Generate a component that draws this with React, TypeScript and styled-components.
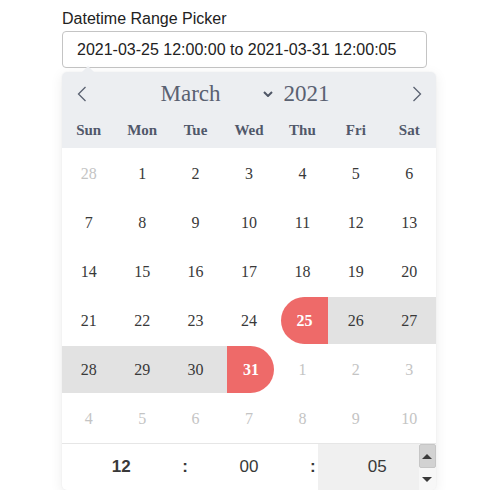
import styled, { createGlobalStyle, css } from "styled-components";

const GlobalStyle = createGlobalStyle`
    body {
        margin: 0;
        background: #ffffff;
    }
`;

const Page = styled.div`
    padding: 9px 0 0 62px;
    font-family: "Liberation Sans", Arial, sans-serif;
`;

const Label = styled.div`
    font-size: 16px;
    line-height: 20px;
    color: #222222;
    margin-bottom: 2px;
`;

const Input = styled.div`
    width: 365px;
    height: 37px;
    box-sizing: border-box;
    border: 1px solid #c4c4c4;
    border-radius: 4px;
    padding: 0 14px;
    display: flex;
    align-items: center;
    font-size: 16px;
    color: #222222;
`;

const Calendar = styled.div`
    position: relative;
    margin-top: 4px;
    width: 374px;
    background: #ffffff;
    border-radius: 5px;
    box-shadow: 0 3px 13px rgba(0, 0, 0, 0.08), 0 0 2px rgba(0, 0, 0, 0.06);
    font-family: "Liberation Serif", "Times New Roman", serif;
    &::before {
        content: "";
        position: absolute;
        top: -6px;
        left: 20px;
        border-left: 6px solid transparent;
        border-right: 6px solid transparent;
        border-bottom: 6px solid #eceef1;
    }
`;

const Header = styled.div`
    background: #eceef1;
    border-radius: 5px 5px 0 0;
    color: #5a6171;
`;

const NavRow = styled.div`
    height: 44px;
    display: grid;
    grid-template-columns: 40px 1fr 40px;
    align-items: center;
`;

const NavArrow = styled.div<{ $side: "prev" | "next" }>`
    display: flex;
    justify-content: ${(p) => (p.$side === "prev" ? "flex-start" : "flex-end")};
    padding: 0 14px;
    ${(p) => (p.$side === "prev" ? "padding-left: 15px;" : "padding-right: 14px;")}
`;

const MonthGroup = styled.div`
    display: flex;
    align-items: center;
    justify-content: center;
    font-size: 23px;
    padding-right: 8px;
`;

const Chevron = styled.span`
    display: flex;
    margin: 0 11px 0 42px;
`;

const WeekRow = styled.div`
    height: 32px;
    padding-bottom: 4px;
    box-sizing: border-box;
    display: grid;
    grid-template-columns: repeat(7, 1fr);
    align-items: center;
    font-size: 15px;
    font-weight: 700;
    color: #51586a;
    text-align: center;
`;

const DaysGrid = styled.div`
    display: grid;
    grid-template-columns: repeat(7, 1fr);
    padding-top: 1px;
`;

type Kind = "normal" | "other" | "range" | "start" | "end";

const Cell = styled.div<{ $kind: Kind }>`
    height: 47px;
    margin: 1px 0;
    display: flex;
    justify-content: center;
    ${(p) => p.$kind === "range" && css`background: #e2e2e2;`}
    ${(p) =>
        p.$kind === "start" &&
        css`background: linear-gradient(to right, transparent 50%, #e2e2e2 50%);`}
    ${(p) =>
        p.$kind === "end" &&
        css`background: linear-gradient(to right, #e2e2e2 50%, transparent 50%);`}
`;

const Day = styled.span<{ $kind: Kind }>`
    width: 47px;
    height: 47px;
    display: flex;
    align-items: center;
    justify-content: center;
    font-size: 16px;
    color: ${(p) => (p.$kind === "other" ? "#c4c4c4" : "#393939")};
    ${(p) =>
        (p.$kind === "start" || p.$kind === "end") &&
        css`
            background: #ee6a69;
            color: #ffffff;
            font-weight: 700;
            border-radius: ${p.$kind === "start" ? "50px 0 0 50px" : "0 50px 50px 0"};
            margin-left: 4px;
        `}
`;

const TimeRow = styled.div`
    display: flex;
    height: 46px;
    border-top: 1px solid #e6e6e6;
    border-radius: 0 0 5px 5px;
    overflow: hidden;
    font-family: "Liberation Sans", Arial, sans-serif;
    font-size: 17px;
    color: #393939;
`;

const TimeField = styled.div<{ $bold?: boolean; $active?: boolean }>`
    flex: 1;
    display: flex;
    align-items: center;
    justify-content: center;
    font-weight: ${(p) => (p.$bold ? 700 : 400)};
    background: ${(p) => (p.$active ? "#f0f0f0" : "transparent")};
    position: relative;
`;

const Separator = styled.div`
    width: 9.5px;
    display: flex;
    align-items: center;
    justify-content: center;
    font-weight: 700;
`;

const ActiveSeconds = styled.div`
    flex: 1;
    display: flex;
    background: #f0f0f0;
`;

const SecondsText = styled.div`
    flex: 1;
    display: flex;
    align-items: center;
    justify-content: center;
    padding-left: 18px;
`;

const Spinner = styled.div`
    width: 17px;
    display: flex;
    flex-direction: column;
    background: #f7f7f7;
`;

const SpinButton = styled.div<{ $pressed?: boolean }>`
    flex: 1;
    display: flex;
    align-items: center;
    justify-content: center;
    background: ${(p) => (p.$pressed ? "#d2d2d2" : "transparent")};
    border: ${(p) => (p.$pressed ? "1px solid #c6c6c6" : "none")};
    border-radius: 2px;
`;

const Triangle = styled.span<{ $up?: boolean }>`
    width: 0;
    height: 0;
    border-left: 5px solid transparent;
    border-right: 5px solid transparent;
    ${(p) =>
        p.$up ? "border-bottom: 5px solid #3a3a3a;" : "border-top: 5px solid #3a3a3a;"}
`;

const weekdays = ["Sun", "Mon", "Tue", "Wed", "Thu", "Fri", "Sat"];

const days: { n: number; kind: Kind }[] = [
    { n: 28, kind: "other" },
    ...Array.from({ length: 31 }, (_, i) => {
        const n = i + 1;
        let kind: Kind = "normal";
        if (n === 25) kind = "start";
        else if (n === 31) kind = "end";
        else if (n > 25) kind = "range";
        return { n, kind };
    }),
    ...Array.from({ length: 10 }, (_, i) => ({ n: i + 1, kind: "other" as Kind })),
];

function ArrowIcon({ dir }: { dir: "left" | "right" }) {
    return (
        <svg width="10" height="16" viewBox="0 0 10 16">
            <path
                d={dir === "left" ? "M8.5 1 L1.5 8 L8.5 15" : "M1.5 1 L8.5 8 L1.5 15"}
                fill="none"
                stroke="#5a6171"
                strokeWidth="1.3"
            />
        </svg>
    );
}

function App() {
    return (
        <Page>
            <GlobalStyle />
            <Label>Datetime Range Picker</Label>
            <Input>2021-03-25 12:00:00 to 2021-03-31 12:00:05</Input>
            <Calendar>
                <Header>
                    <NavRow>
                        <NavArrow $side="prev">
                            <ArrowIcon dir="left" />
                        </NavArrow>
                        <MonthGroup>
                            <span>March</span>
                            <Chevron>
                                <svg width="10" height="6" viewBox="0 0 10 6">
                                    <path d="M1 1 L5 5 L9 1" fill="none" stroke="#4f5666" strokeWidth="2" />
                                </svg>
                            </Chevron>
                            <span>2021</span>
                        </MonthGroup>
                        <NavArrow $side="next">
                            <ArrowIcon dir="right" />
                        </NavArrow>
                    </NavRow>
                    <WeekRow>
                        {weekdays.map((d) => (
                            <span key={d}>{d}</span>
                        ))}
                    </WeekRow>
                </Header>
                <DaysGrid>
                    {days.map((d, i) => (
                        <Cell key={i} $kind={d.kind}>
                            <Day $kind={d.kind}>{d.n}</Day>
                        </Cell>
                    ))}
                </DaysGrid>
                <TimeRow>
                    <TimeField $bold>12</TimeField>
                    <Separator>:</Separator>
                    <TimeField>00</TimeField>
                    <Separator>:</Separator>
                    <ActiveSeconds>
                        <SecondsText>05</SecondsText>
                        <Spinner>
                            <SpinButton $pressed>
                                <Triangle $up />
                            </SpinButton>
                            <SpinButton>
                                <Triangle />
                            </SpinButton>
                        </Spinner>
                    </ActiveSeconds>
                </TimeRow>
            </Calendar>
        </Page>
    );
}

export default App;
